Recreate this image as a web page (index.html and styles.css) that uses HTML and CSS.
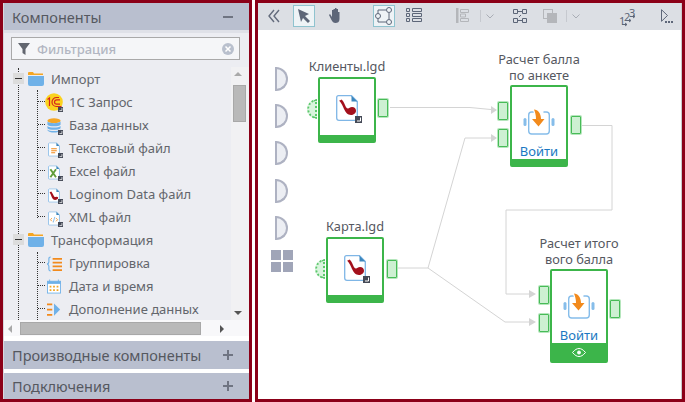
FILE: index.html
```html
<!doctype html>
<html>
<head>
  <title>Сценарий</title>
  <link rel="stylesheet" href="styles.css">
</head>
<body>
  <svg width="0" height="0" class="defs">
    <symbol id="pipe" viewBox="0 0 22 26">
      <path d="M2.500 .7H15.500L21.300 6.500V23q0 2.300-2.300 2.300H3q-2.300 0-2.300-2.300V2.500q0-1.800 1.800-1.800z" fill="#fff" stroke="#7fb6e6" stroke-width="1.300"/>
      <path d="M15.500 .7l5.800 5.800h-5.800z" fill="#3d87bd"/>
      <path d="M3 6l2.500-1.500c1.500 1 2.500 3 3.500 5.500 1 2 1.500 3.500 3 3.500 1 0 2-1.500 4-1.500 2.500 0 4 1.700 4 3.700 0 2.500-2.500 4.300-5 4.300-3.500 0-5.500-3-7-6-1-2.500-2.500-6-5-8.500z" fill="#a3101c"/>
    </symbol>
    <symbol id="link" viewBox="0 0 7 7">
      <rect width="7" height="7" fill="#454a57"/>
      <path d="M5.500 1.500v3.500h-3.500" fill="none" stroke="#fff"/>
    </symbol>
    <symbol id="proc" viewBox="0 0 32 26">
      <rect x=".5" y="9" width="3" height="8" rx="1.500" fill="#86bdea"/>
      <rect x="28.500" y="9" width="3" height="8" rx="1.500" fill="#86bdea"/>
      <rect x="5.700" y="3" width="20.600" height="22" rx="3" fill="#fff" stroke="#86bdea" stroke-width="1.400"/>
      <path d="M9.500 0h11v3l-1 6h3.500l-7.500 9-8-9h4.500V7z" fill="#fff"/>
      <path d="M11 .5c4 0 7 4 7 9.500h3.500l-6 7.500-6.500-7.500h4c0-4-1-7-2-9.500z" fill="#f28a1c"/>
    </symbol>
    <symbol id="doc" viewBox="0 0 15 18">
      <path d="M1.500.7h9l3.800 3.800v11.300q0 1.500-1.500 1.500H1.700q-1 0-1-1V1.500z" fill="#fff" stroke="#7fb6e6"/>
      <path d="M10.500 .7l3.800 3.800h-3.800z" fill="#3d87bd"/>
    </symbol>
  </svg>

  <div class="app">
    <div class="frame frame-side">
      <aside class="side">
        <div class="side-head side-head-top">
          <span>Компоненты</span>
          <span class="side-sign minus"></span>
        </div>

        <div class="side-body">
          <div class="filter">
            <svg class="filter-icon" width="12" height="12" viewBox="0 0 12 12"><path d="M0 0h12L7.500 6v6l-3-2V6z" fill="#62666f"/></svg>
            <span class="filter-text">Фильтрация</span>
            <svg class="filter-clear" width="12" height="12" viewBox="0 0 12 12"><circle cx="6" cy="6" r="6" fill="#b9c0cd"/><path d="M3.500 3.500l5 5m0-5l-5 5" stroke="#fff" stroke-width="1.500"/></svg>
          </div>

          <div class="tree-box">
            <div class="tree">
              <div class="guide guide-root"></div>
              <div class="guide guide-a"></div>
              <div class="guide guide-b"></div>

              <div class="row group">
                <span class="toggle"></span>
                <svg class="ico" width="16" height="15" viewBox="0 0 16 15"><path d="M0 2q0-1 1-1h4l1 1.500h9V4H0z" fill="#f5a623"/><path d="M0 5h16v8q0 2-2 2H2q-2 0-2-2z" fill="#6fb1e8"/></svg>
                <span>Импорт</span>
              </div>
              <div class="row leaf">
                <svg class="ico ico-round" width="18" height="18" viewBox="0 0 18 18"><circle cx="9" cy="9" r="8.800" fill="#fbd21e"/><path d="M2.500 6.500l2-1.500v8M7 9a4.500 4.500 0 0 1 4.500-4.500h2.500M7 9a4.500 4.500 0 0 0 4.500 4.500h5M9.500 9a2.200 2.200 0 0 1 2.200-2.200h3.300M9.500 9a2.200 2.200 0 0 0 2.200 2.200h3.300" fill="none" stroke="#d4251c" stroke-width="1.200"/></svg>
                <svg class="lnk" width="5" height="5"><use href="#link"/></svg>
                <span>1С Запрос</span>
              </div>
              <div class="row leaf">
                <svg class="ico" width="14" height="15" viewBox="0 0 16 17"><ellipse cx="8" cy="3" rx="7.500" ry="2.800" fill="#f5a623"/><path d="M.5 4c2 2.500 13 2.500 15 0v3.500c-2 2.500-13 2.500-15 0z" fill="#6fb1e8"/><path d="M.5 9c2 2.500 13 2.500 15 0v2.500c-2 2.500-13 2.500-15 0z" fill="#6fb1e8"/><path d="M.5 13c2 2.500 13 2.500 15 0v1c-2 3.500-13 3.500-15 0z" fill="#6fb1e8"/></svg>
                <svg class="lnk" width="5" height="5"><use href="#link"/></svg>
                <span>База данных</span>
              </div>
              <div class="row leaf">
                <svg class="ico ico-doc" width="12" height="15" viewBox="0 0 15 18"><use href="#doc" width="15" height="18"/><path d="M4 8h7M4 10.500h7M4 13h5" stroke="#f28a1c" stroke-width="1.300"/></svg>
                <svg class="lnk" width="5" height="5"><use href="#link"/></svg>
                <span>Текстовый файл</span>
              </div>
              <div class="row leaf">
                <svg class="ico ico-doc" width="12" height="15" viewBox="0 0 15 18"><use href="#doc" width="15" height="18"/><path d="M3 5l7 10M10 5l-7 10" stroke="#5f9e3c" stroke-width="2.400"/></svg>
                <svg class="lnk" width="5" height="5"><use href="#link"/></svg>
                <span>Excel файл</span>
              </div>
              <div class="row leaf">
                <svg class="ico ico-doc" width="12" height="15" viewBox="0 0 15 18"><use href="#doc" width="15" height="18"/><path d="M2 5l2-1c1 1 2 3 3 5 .5 1 1 2 2 2l2-.5c1.500 0 2 1 1.500 2.200-.5 1-2 1.800-3.500 1.800-2.500 0-3.500-2-4.500-4-.5-1.500-1.500-3.500-2.500-5.500z" fill="#a3101c"/></svg>
                <svg class="lnk" width="5" height="5"><use href="#link"/></svg>
                <span>Loginom Data файл</span>
              </div>
              <div class="row leaf">
                <svg class="ico ico-doc" width="12" height="15" viewBox="0 0 15 18"><use href="#doc" width="15" height="18"/><path d="M5 8.500l-2 2 2 2M10 8.500l2 2-2 2" fill="none" stroke="#f28a1c"/><path d="M8.500 7l-2 7" stroke="#6fb1e8"/></svg>
                <svg class="lnk" width="5" height="5"><use href="#link"/></svg>
                <span>XML файл</span>
              </div>
              <div class="row group">
                <span class="toggle"></span>
                <svg class="ico" width="16" height="15" viewBox="0 0 16 15"><path d="M0 2q0-1 1-1h4l1 1.500h9V4H0z" fill="#f5a623"/><path d="M0 5h16v8q0 2-2 2H2q-2 0-2-2z" fill="#6fb1e8"/></svg>
                <span>Трансформация</span>
              </div>
              <div class="row leaf">
                <svg class="ico" width="15" height="16" viewBox="0 0 16 17"><path d="M4 1Q2 1 2 3v3q0 2-2 2.500Q2 9 2 11v3q0 2 2 2" fill="none" stroke="#6fb1e8" stroke-width="1.200"/><path d="M6 3h10M6 7h10M6 11h10M6 15h10" stroke="#f28a1c" stroke-width="2"/></svg>
                <span>Группировка</span>
              </div>
              <div class="row leaf">
                <svg class="ico" width="14" height="15" viewBox="0 0 16 16"><rect x=".5" y="2" width="15" height="13.500" fill="#fff" stroke="#6fb1e8"/><rect x=".5" y="2" width="15" height="3" fill="#6fb1e8"/><path d="M3 0v3M13 0v3" stroke="#6fb1e8"/><path d="M3 7h2v2H3zM7 7h2v2H7zM11 7h2v2h-2zM3 11h2v2H3zM7 11h2v2H7zM11 11h2v2h-2z" fill="#f5a623"/></svg>
                <span>Дата и время</span>
              </div>
              <div class="row leaf">
                <svg class="ico" width="14" height="15" viewBox="0 0 16 16"><path d="M0 2h6M0 8h6M0 14h6" stroke="#f28a1c" stroke-width="2"/><path d="M8 1l7 7-7 7z" fill="#6fb1e8"/></svg>
                <span>Дополнение данных</span>
              </div>
            </div>

            <div class="vbar">
              <span class="arrow up"></span>
              <span class="vthumb"></span>
              <span class="arrow down"></span>
            </div>
            <div class="hbar">
              <span class="arrow left"></span>
              <span class="hthumb"></span>
              <span class="arrow right"></span>
            </div>
          </div>
        </div>

        <div class="side-head side-head-mid">
          <span>Производные компоненты</span>
          <span class="side-sign plus"></span>
        </div>
        <div class="side-head side-head-low">
          <span>Подключения</span>
          <span class="side-sign plus"></span>
        </div>
      </aside>
    </div>

    <div class="frame frame-work">
      <main class="work">
        <div class="toolbar">
          <svg class="tool t-back" width="12" height="14" viewBox="0 0 12 14"><path d="M6 1L1 7l5 6M11 1L6 7l5 6" fill="none" stroke="#636b7c" stroke-width="1.400"/></svg>
          <span class="tool-btn t-arrow"><svg width="14" height="14" viewBox="0 0 14 14"><path d="M1 0l11 5-4 2 5 5-2 2-5-5-2 4z" fill="#5d6678"/></svg></span>
          <svg class="tool t-hand" width="13" height="15" viewBox="0 0 13 15"><path d="M1 6l2 3V2h1.500v4-5H6v5-6h1.500v6-5H9v6-3h1.500v7c0 3-2 4-4 4s-3-1-4-3L0 7z" fill="#5d6678"/></svg>
          <span class="tool-btn t-graph"><svg width="18" height="18" viewBox="0 0 18 18" fill="none" stroke="#5d6678"><circle cx="3" cy="9" r="2.500"/><circle cx="14" cy="3" r="2.500"/><circle cx="14" cy="15" r="2.500"/><path d="M3 6.500V3h8M3 11.500V15h8M14 6v6"/></svg></span>
          <svg class="tool t-list" width="16" height="14" viewBox="0 0 16 14" fill="none" stroke="#5d6678"><path d="M.5.500h3v3h-3zM.5 5.500h3v3h-3zM.5 10.500h3v3h-3zM6.500.500h9v3h-9zM6.500 5.500h9v3h-9zM6.500 10.500h9v3h-9z"/></svg>
          <svg class="tool t-align" width="13" height="15" viewBox="0 0 13 15"><path d="M0 0h2.500v15H0z" fill="#b4b6ba"/><path d="M4.500 1.500h8v3h-8zM4.500 6h5v3h-5zM4.500 10.500h8v3h-8z" fill="none" stroke="#b4b6ba"/></svg>
          <span class="tool-sep t-sep1"></span>
          <svg class="tool t-chev" width="8" height="5" viewBox="0 0 8 5"><path d="M.5.500L4 4 7.500.500" fill="none" stroke="#a9adb5"/></svg>
          <svg class="tool t-nodes" width="14" height="14" viewBox="0 0 14 14" fill="none" stroke="#5d6678"><path d="M.5.500h4v4h-4zM9.500.500h4v4h-4zM.5 9.500h4v4h-4zM9.500 9.500h4v4h-4zM4.500 2.500h5M4.500 11.500h5M8 6L6 8"/></svg>
          <svg class="tool t-copy" width="14" height="14" viewBox="0 0 14 14"><rect x=".5" y=".5" width="9" height="9" fill="none" stroke="#b4b6ba"/><rect x="4" y="4" width="10" height="10" fill="#b4b6ba"/></svg>
          <span class="tool-sep t-sep2"></span>
          <svg class="tool t-chev2" width="8" height="5" viewBox="0 0 8 5"><path d="M.5.500L4 4 7.500.500" fill="none" stroke="#a9adb5"/></svg>
          <span class="tool t-order">
            <i>1</i><i>2</i><i>3</i>
            <svg width="16" height="18" viewBox="0 0 16 18" fill="none" stroke="#5d6678"><path d="M3 15.500h5M6 14l2 1.500L6 17M7 11.500h4.500M10 10l2 1.500-2 1.500M11 7.500h4.500M14 6l2 1.500L14 9"/></svg>
          </span>
          <svg class="tool t-run" width="12" height="15" viewBox="0 0 12 15"><path d="M.5 .7l6 5.800-6 5.800z" fill="none" stroke="#5d6678"/><path d="M4 12h2v2H4zM7 12h2v2H7zM10 12h2v2h-2z" fill="#5d6678"/></svg>
        </div>

        <div class="canvas">
          <svg class="wires" width="423" height="369" viewBox="258 30 423 369" fill="none" stroke="#d4d4d4">
            <path d="M390 107.500H470L496 110"/>
            <path d="M398 268H428L465 138H496"/>
            <path d="M428 268L505 322H534"/>
            <path d="M582 125.500H612V210H506V294H534"/>
            <path d="M491 106l6 4-6 4zM491 134l6 4-6 4zM529 290l7 4-7 4zM529 318l7 4-7 4z" fill="#d4d4d4" stroke="none"/>
          </svg>

          <span class="half half-1"></span>
          <span class="half half-2"></span>
          <span class="half half-3"></span>
          <span class="half half-4"></span>
          <span class="half half-5"></span>
          <svg class="grid-ico" width="22" height="22" viewBox="0 0 22 22"><path d="M0 0h10v10H0zM12 0h10v10H12zM0 12h10v10H0zM12 12h10v10H12z" fill="#a0a5b8"/></svg>

          <div class="node node-clients">
            <div class="node-title">Клиенты.lgd</div>
            <div class="node-box">
              <div class="node-main">
                <svg class="pipe" width="22" height="26"><use href="#pipe"/></svg>
                <svg class="pipe-link" width="7" height="7"><use href="#link"/></svg>
              </div>
              <div class="node-foot"></div>
            </div>
          </div>
          <span class="dash dash-1"></span>
          <span class="port p-1"></span>

          <div class="node node-map">
            <div class="node-title">Карта.lgd</div>
            <div class="node-box">
              <div class="node-main">
                <svg class="pipe" width="22" height="26"><use href="#pipe"/></svg>
                <svg class="pipe-link" width="7" height="7"><use href="#link"/></svg>
              </div>
              <div class="node-foot"></div>
            </div>
          </div>
          <span class="dash dash-2"></span>
          <span class="port p-2"></span>

          <div class="node node-calc">
            <div class="node-title">Расчет балла<br>по анкете</div>
            <div class="node-box">
              <div class="node-main tall">
                <svg class="proc" width="32" height="26"><use href="#proc"/></svg>
                <a class="login">Войти</a>
              </div>
              <div class="node-foot"></div>
            </div>
          </div>
          <span class="port p-3"></span>
          <span class="port p-4"></span>
          <span class="port p-5"></span>

          <div class="node node-total">
            <div class="node-title">Расчет итого<br>вого балла</div>
            <div class="node-box">
              <div class="node-main tall">
                <svg class="proc" width="32" height="26"><use href="#proc"/></svg>
                <a class="login">Войти</a>
              </div>
              <div class="node-foot big">
                <svg width="14" height="9" viewBox="0 0 14 9" fill="none" stroke="#fff"><path d="M.5 4.500C3 1.500 5 .5 7 .5s4 1 6.500 4C11 7.500 9 8.500 7 8.500s-4-1-6.500-4z"/><circle cx="7" cy="4.500" r="1.500" fill="#fff"/></svg>
              </div>
            </div>
          </div>
          <span class="port p-6"></span>
          <span class="port p-7"></span>
          <span class="port p-8"></span>
        </div>
      </main>
    </div>
  </div>
</body>
</html>
```

FILE: styles.css
```css
html, body {
  margin: 0;
  padding: 0;
}

body {
  width: 685px;
  height: 402px;
  overflow: hidden;
  background: #fff;
  font-family: "Noto Sans", sans-serif;
  font-size: 13px;
  color: #63666c;
}

.defs {
  position: absolute;
}

.app {
  display: flex;
  height: 402px;
  gap: 3px;
}

.frame {
  box-sizing: border-box;
  height: 402px;
  border: 3px solid #8b0018;
}

.frame-side {
  width: 252px;
}

.frame-work {
  width: 430px;
}

/* left panel */

.side {
  height: 396px;
  display: flex;
  flex-direction: column;
  background: #fff;
  border-left: 1px solid #d8d8de;
}

.side-head {
  display: flex;
  align-items: center;
  justify-content: space-between;
  padding: 0 16px 0 8px;
  background: #b9bfcf;
  font-size: 14.500px;
  color: #55585f;
}

.side-head-top {
  height: 27px;
  flex: none;
}

.side-head-mid {
  height: 28px;
  flex: none;
  margin-top: 5px;
}

.side-head-low {
  height: 26px;
  flex: none;
  margin-top: 4px;
}

.side-sign {
  width: 10px;
  height: 10px;
  position: relative;
}

.side-sign::before, .plus::after {
  content: "";
  position: absolute;
  left: 0;
  top: 4px;
  width: 10px;
  height: 2px;
  background: #6f7482;
}

.plus::after {
  left: 4px;
  top: 0;
  width: 2px;
  height: 10px;
}

.side-body {
  height: 306px;
  flex: none;
  box-sizing: border-box;
  background: #ecedf2;
  border-top: 3px solid #dfe1e8;
  padding-top: 4px;
}

.filter {
  display: flex;
  align-items: center;
  box-sizing: border-box;
  width: 229px;
  height: 23px;
  margin-left: 7px;
  padding: 0 5px 0 6px;
  background: #f5f6f8;
  border: 1px solid #a9a9a9;
  color: #b2b6c2;
  font-weight: 500;
}

.filter-text {
  margin-left: 7px;
  flex: 1;
}

.tree-box {
  position: relative;
  height: 269px;
  margin-top: 7px;
}

.tree {
  position: relative;
  height: 253px;
  width: 227px;
  overflow: hidden;
}

.row {
  display: flex;
  align-items: center;
  position: relative;
  height: 23px;
}

.group {
  padding-left: 9px;
}

.leaf {
  padding-left: 41px;
}

.group .ico {
  margin-left: 4px;
  margin-right: 7px;
  flex: none;
}

.leaf .ico {
  position: absolute;
  left: 43px;
  top: 5px;
}

.leaf .ico-round {
  left: 41px;
  top: 3px;
}

.leaf .ico-doc {
  left: 44px;
  top: 6px;
}

.leaf span {
  margin-left: 24px;
}

.lnk {
  position: absolute;
  left: 54px;
  top: 17px;
}

.toggle {
  width: 11px;
  height: 11px;
  background: #dcdcdc;
  position: relative;
  flex: none;
}

.toggle::before {
  content: "";
  position: absolute;
  left: 2px;
  top: 5px;
  width: 7px;
  height: 1px;
  background: #333;
}

.guide {
  position: absolute;
  border-left: 1px dotted #333;
}

.guide-root {
  left: 14px;
  top: 1px;
  height: 252px;
}

.guide-a {
  left: 33px;
  top: 23px;
  height: 128px;
}

.guide-b {
  left: 33px;
  top: 185px;
  height: 68px;
}

.leaf::before {
  content: "";
  position: absolute;
  left: 34px;
  top: 11px;
  width: 7px;
  border-top: 1px dotted #333;
}

.vbar {
  position: absolute;
  left: 227px;
  top: 0;
  width: 18px;
  height: 253px;
  background: #f1f1f3;
}

.vthumb {
  position: absolute;
  left: 2px;
  top: 18px;
  width: 11px;
  height: 35px;
  background: #b9b9b9;
  border: 1px solid #a8a8a8;
}

.hbar {
  position: absolute;
  left: 0;
  top: 253px;
  width: 245px;
  height: 16px;
  background: #f8f8fa;
}

.hthumb {
  position: absolute;
  left: 16px;
  top: 2px;
  width: 179px;
  height: 11px;
  background: #b9b9b9;
  border: 1px solid #a8a8a8;
}

.arrow {
  position: absolute;
  width: 0;
  height: 0;
}

.up {
  left: 3px;
  top: 5px;
  border: 4px solid transparent;
  border-top: 0;
  border-bottom: 4px solid #a9a9a9;
}

.down {
  left: 3px;
  bottom: 5px;
  border: 4px solid transparent;
  border-bottom: 0;
  border-top: 4px solid #555;
}

.left {
  left: 4px;
  top: 5px;
  border: 4px solid transparent;
  border-left: 0;
  border-right: 4px solid #a9a9a9;
}

.right {
  left: 216px;
  top: 5px;
  border: 4px solid transparent;
  border-right: 0;
  border-left: 4px solid #555;
}

/* right panel */

.work {
  height: 396px;
  display: flex;
  flex-direction: column;
  background: #fff;
  border-right: 1px solid #c9c9cc;
}

.toolbar {
  position: relative;
  height: 27px;
  flex: none;
  background: #dcdfe4;
}

.tool, .tool-btn, .tool-sep {
  position: absolute;
}

.tool-btn {
  display: flex;
  align-items: center;
  justify-content: center;
  box-sizing: border-box;
  width: 22px;
  height: 22px;
  top: 2px;
  background: #eef3f6;
  border: 1px solid #8fc3cf;
}

.tool-sep {
  top: 7px;
  width: 1px;
  height: 12px;
  background: #c6c9cf;
}

.t-back { left: 10px; top: 6px; }
.t-arrow { left: 35px; }
.t-hand { left: 71px; top: 5px; }
.t-graph { left: 115px; }
.t-list { left: 148px; top: 5px; }
.t-align { left: 198px; top: 5px; }
.t-sep1 { left: 222px; }
.t-chev { left: 228px; top: 11px; }
.t-nodes { left: 255px; top: 6px; }
.t-copy { left: 285px; top: 6px; }
.t-sep2 { left: 308px; }
.t-chev2 { left: 314px; top: 11px; }
.t-run { left: 403px; top: 6px; }

.t-order {
  left: 361px;
  top: 3px;
  width: 16px;
  height: 22px;
  font-size: 11px;
  color: #5d6678;
}

.t-order svg {
  position: absolute;
  left: 0;
  top: 3px;
}

.t-order i {
  position: absolute;
  font-style: normal;
  line-height: 10px;
}

.t-order i:nth-child(1) { left: 0; top: 10px; }
.t-order i:nth-child(2) { left: 5px; top: 6px; }
.t-order i:nth-child(3) { left: 10px; top: 2px; }

.canvas {
  position: relative;
  flex: 1;
  overflow: hidden;
}

.wires {
  position: absolute;
  left: 0;
  top: 0;
}

.half {
  position: absolute;
  left: 17px;
  width: 9px;
  height: 20px;
  background: #eceef3;
  border: 2px solid #aeb2c2;
  border-radius: 0 12px 12px 0;
}

.half-1 { top: 37px; }
.half-2 { top: 74px; }
.half-3 { top: 111px; }
.half-4 { top: 149px; }
.half-5 { top: 186px; }

.grid-ico {
  position: absolute;
  left: 13px;
  top: 220px;
}

.node {
  position: absolute;
  width: 58px;
  display: flex;
  flex-direction: column;
  align-items: center;
}

.node-title {
  white-space: nowrap;
  font-size: 12.800px;
  line-height: 16px;
  text-align: center;
  color: #55585f;
}

.node-box {
  box-sizing: border-box;
  width: 58px;
  display: flex;
  flex-direction: column;
  margin-top: 2px;
  border: 2px solid #3cb54a;
  border-radius: 2px;
  background: #fff;
}

.node-clients .node-box, .node-map .node-box {
  margin-top: 3px;
}

.node-main {
  position: relative;
  height: 56px;
  display: flex;
  justify-content: center;
  padding-top: 16px;
  box-sizing: border-box;
}

.node-main.tall {
  height: 72px;
  padding-top: 22px;
}

.node-foot {
  height: 6px;
  background: #3cb54a;
}

.node-foot.big {
  height: 18px;
  display: flex;
  align-items: center;
  justify-content: center;
}

.pipe-link {
  position: absolute;
  left: 35px;
  top: 37px;
}

.login {
  position: absolute;
  left: 0;
  right: 0;
  bottom: -1px;
  text-align: center;
  font-size: 13px;
  color: #1b78c2;
}

.node-clients { left: 60px; top: 28px; }
.node-map { left: 68px; top: 188px; }
.node-calc { left: 252px; top: 21px; }
.node-total { left: 292px; top: 205px; }

.port {
  position: absolute;
  box-sizing: border-box;
  width: 10px;
  height: 18px;
  background: #cdf0d2;
  border: 1px solid #47bb57;
  border-radius: 1px;
  box-shadow: 0 0 0 1px #b5e6bc;
}

.p-1 { left: 120px; top: 69px; }
.p-2 { left: 129px; top: 230px; }
.p-3 { left: 240px; top: 72px; }
.p-4 { left: 240px; top: 99px; }
.p-5 { left: 313px; top: 86px; }
.p-6 { left: 281px; top: 256px; }
.p-7 { left: 281px; top: 284px; }
.p-8 { left: 352px; top: 270px; }

.dash {
  position: absolute;
  box-sizing: border-box;
  width: 10px;
  height: 20px;
  background: #d9f4dd;
  border: 2px dotted #5cc86c;
  border-radius: 10px 0 0 10px;
}

.dash-1 { left: 49px; top: 69px; }
.dash-2 { left: 57px; top: 229px; }
```
